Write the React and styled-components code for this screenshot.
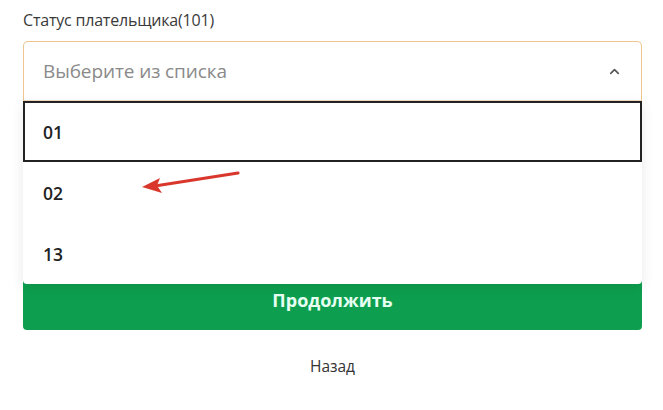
import styled, { createGlobalStyle } from "styled-components";
import { FiChevronUp } from "react-icons/fi";

const GlobalStyle = createGlobalStyle`
	body {
		margin: 0;
		background: #fff;
		font-family: "Open Sans", "Noto Sans", sans-serif;
		color: #333;
	}
`;

const options = ["01", "02", "13"];

const App = () => {
	return (
		<Page>
			<GlobalStyle />
			<Label>Статус плательщика(101)</Label>
			<SelectWrap>
				<SelectBox>
					<Placeholder>Выберите из списка</Placeholder>
					<FiChevronUp className="select__chevron" />
				</SelectBox>
				<Dropdown>
					{options.map((o, i) => (
						<Option key={o} $active={i === 0}>
							{o}
						</Option>
					))}
				</Dropdown>
				<Pointer viewBox="0 0 110 30" width="110" height="30">
					<path d="M100 3 L20 15.5" stroke="#d9372c" strokeWidth="3.2" strokeLinecap="round" />
					<path d="M4 17 L22 8 L19 15.5 L24 23 Z" fill="#d9372c" />
				</Pointer>
			</SelectWrap>
			<Button>Продолжить</Button>
			<BackLink>Назад</BackLink>
		</Page>
	);
};

const Page = styled.div`
	width: 663px;
	height: 410px;
	box-sizing: border-box;
	padding: 10px 21px 0 23px;
	display: flex;
	flex-direction: column;
`;

const Label = styled.div`
	font-size: 16px;
	line-height: 21px;
	color: #3a3a3a;
	letter-spacing: -0.2px;
`;

const SelectWrap = styled.div`
	position: relative;
	margin-top: 10px;
`;

const SelectBox = styled.div`
	height: 60px;
	box-sizing: border-box;
	display: flex;
	align-items: center;
	justify-content: space-between;
	padding: 0 19px 0 19px;
	border: 1px solid #eec58f;
	border-bottom-color: #f2dcc0;
	border-radius: 5px 5px 0 0;
	background: #fff;

	> .select__chevron {
		color: #555;
		width: 15px;
		height: 15px;
		stroke-width: 2.6;
	}
`;

const Placeholder = styled.span`
	font-size: 19px;
	color: #8a8a8a;
	letter-spacing: -0.1px;
`;

const Dropdown = styled.div`
	position: absolute;
	left: 0;
	right: 0;
	top: 60px;
	z-index: 2;
	background: #fff;
	box-shadow: 0 4px 14px rgba(0, 0, 0, 0.09);
	border-radius: 0 0 4px 4px;
`;

const Option = styled.div`
	height: 61px;
	box-sizing: border-box;
	display: flex;
	align-items: center;
	padding-left: ${(p) => (p.$active ? "18px" : "20px")};
	font-size: 17.5px;
	font-weight: 600;
	color: #222;
	border: ${(p) => (p.$active ? "2px solid #222" : "none")};
`;

const Pointer = styled.svg`
	position: absolute;
	left: 115px;
	top: 129px;
	z-index: 3;
	overflow: visible;
`;

const Button = styled.div`
	margin-top: 168px;
	height: 61px;
	border-radius: 4px;
	background: #0d9f4f;
	color: #e6fff2;
	font-size: 18px;
	font-weight: 700;
	display: flex;
	align-items: center;
	justify-content: center;
`;

const BackLink = styled.div`
	margin-top: 25px;
	text-align: center;
	font-size: 15.5px;
	color: #333;
`;

export default App;
